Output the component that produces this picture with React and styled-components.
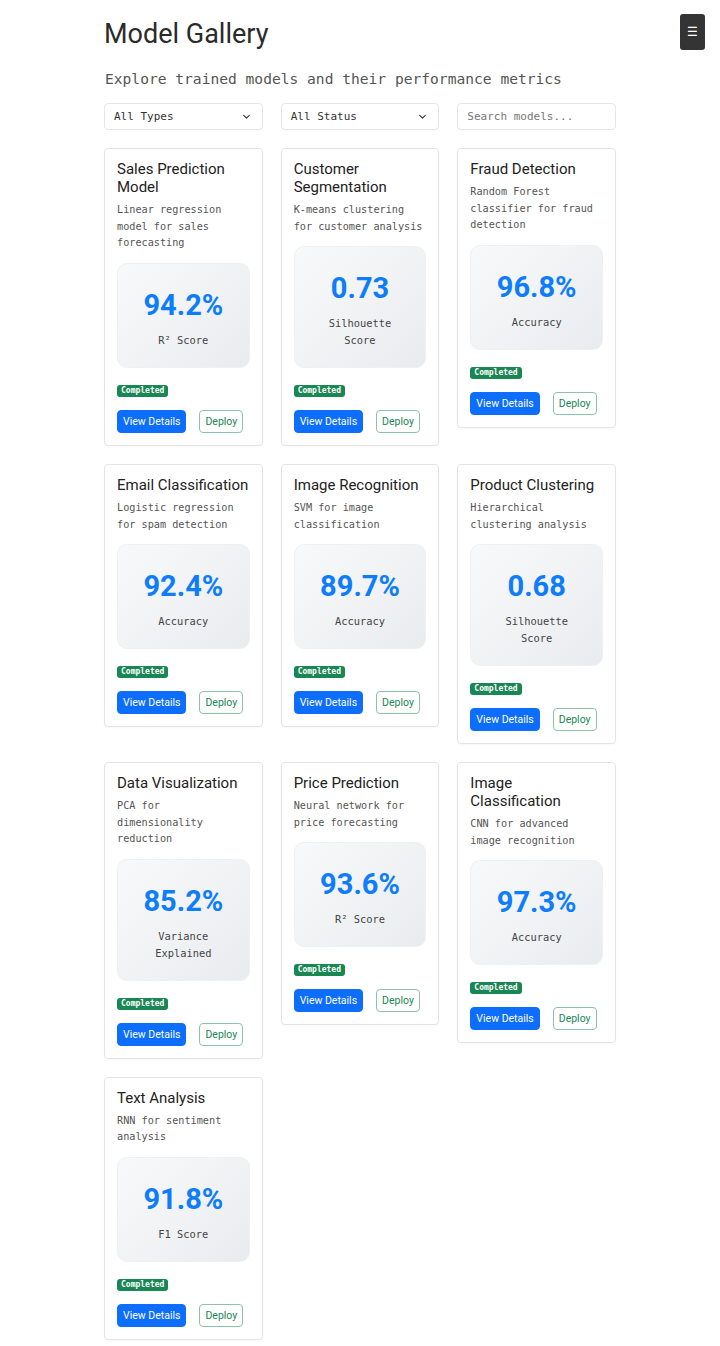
import React from "react";
import styled, { createGlobalStyle } from "styled-components";

const GlobalStyle = createGlobalStyle`
  * { box-sizing: border-box; }
  body {
    margin: 0;
    background: #ffffff;
    font-family: Roboto, "Liberation Sans", sans-serif;
    color: #212529;
  }
`;

const MONO = `"DejaVu Sans Mono", "Liberation Mono", monospace`;

const Page = styled.main`
  width: 512px;
  margin: 0 auto;
  padding: 18px 0 40px;
`;

const Title = styled.h1`
  margin: 0;
  font-family: Roboto, sans-serif;
  font-size: 27px;
  font-weight: 400;
  line-height: 32px;
  color: #2b2b2b;
`;

const Subtitle = styled.p`
  margin: 19px 0 0 1px;
  font-family: ${MONO};
  font-size: 14.6px;
  line-height: 20px;
  color: #555;
`;

const Filters = styled.div`
  display: grid;
  grid-template-columns: repeat(3, minmax(0, 1fr));
  gap: 18px;
  margin-top: 14px;
`;

const FakeSelect = styled.div`
  height: 27px;
  display: flex;
  align-items: center;
  justify-content: space-between;
  padding: 0 11px 0 9px;
  border: 1px solid #e3e6ea;
  border-radius: 4px;
  background: #fff;
  font-family: ${MONO};
  font-size: 11px;
  color: #333;
`;

const SearchInput = styled.input`
  height: 27px;
  width: 100%;
  min-width: 0;
  padding: 0 9px;
  border: 1px solid #e3e6ea;
  border-radius: 4px;
  font-family: ${MONO};
  font-size: 11px;
  color: #333;
  outline: none;
  &::placeholder { color: #777; }
`;

const Grid = styled.section`
  display: grid;
  grid-template-columns: repeat(3, minmax(0, 1fr));
  column-gap: 18px;
  row-gap: 18px;
  align-items: start;
  margin-top: 18px;
`;

const Card = styled.article`
  border: 1px solid #e2e5e8;
  border-radius: 4px;
  padding: 11px 12px 12px;
  background: #fff;
  box-shadow: 0 1px 2px rgba(0, 0, 0, 0.03);
`;

const CardTitle = styled.h2`
  margin: 0;
  font-family: Roboto, sans-serif;
  font-size: 15px;
  font-weight: 400;
  line-height: 18px;
  color: #222;
`;

const Desc = styled.p`
  margin: 6px 0 0;
  font-family: ${MONO};
  font-size: 10.2px;
  line-height: 16.5px;
  color: #555;
`;

const Metric = styled.div`
  margin-top: 11px;
  padding: 24px 20px 18px;
  border-radius: 10px;
  border: 1px solid #eef0f2;
  background: linear-gradient(135deg, #f8f9fa 0%, #e9ecef 100%);
  text-align: center;
`;

const Value = styled.div`
  font-family: Roboto, sans-serif;
  font-size: 29px;
  font-weight: 700;
  line-height: 34px;
  color: #0d7dfd;
`;

const Label = styled.div`
  margin-top: 10px;
  font-family: ${MONO};
  font-size: 10.4px;
  line-height: 17px;
  color: #444;
`;

const Badge = styled.span`
  display: inline-block;
  margin-top: 17px;
  padding: 0 4px;
  height: 12px;
  line-height: 12px;
  border-radius: 3px;
  background: #198754;
  color: #fff;
  font-family: ${MONO};
  font-size: 8px;
  font-weight: 700;
`;

const Actions = styled.div`
  display: flex;
  gap: 13px;
  margin-top: 13px;
`;

const Button = styled.button`
  height: 23px;
  padding: 0 5px;
  white-space: nowrap;
  border-radius: 4px;
  font-family: Roboto, sans-serif;
  font-size: 10.5px;
  font-weight: 400;
  cursor: pointer;
  border: 1px solid ${(p) => (p.$variant === "primary" ? "#0d6efd" : "#8cc2a7")};
  background: ${(p) => (p.$variant === "primary" ? "#0d6efd" : "#fff")};
  color: ${(p) => (p.$variant === "primary" ? "#fff" : "#198754")};
`;

const Menu = styled.button`
  position: fixed;
  top: 14px;
  right: 15px;
  width: 25px;
  height: 36px;
  border: none;
  border-radius: 3px;
  background: #343434;
  color: #fff;
  font-size: 12px;
  padding: 0;
  display: flex;
  align-items: center;
  justify-content: center;
`;

const Chevron = () => (
  <svg width="9" height="9" viewBox="0 0 16 16" fill="none">
    <path d="M3 6l5 5 5-5" stroke="#333" strokeWidth="1.8" strokeLinecap="round" strokeLinejoin="round" />
  </svg>
);

const models = [
  ["Sales Prediction Model", "Linear regression model for sales forecasting", "94.2%", "R² Score"],
  ["Customer Segmentation", "K-means clustering for customer analysis", "0.73", "Silhouette Score"],
  ["Fraud Detection", "Random Forest classifier for fraud detection", "96.8%", "Accuracy"],
  ["Email Classification", "Logistic regression for spam detection", "92.4%", "Accuracy"],
  ["Image Recognition", "SVM for image classification", "89.7%", "Accuracy"],
  ["Product Clustering", "Hierarchical clustering analysis", "0.68", "Silhouette Score"],
  ["Data Visualization", "PCA for dimensionality reduction", "85.2%", "Variance Explained"],
  ["Price Prediction", "Neural network for price forecasting", "93.6%", "R² Score"],
  ["Image Classification", "CNN for advanced image recognition", "97.3%", "Accuracy"],
  ["Text Analysis", "RNN for sentiment analysis", "91.8%", "F1 Score"],
];

export default function App() {
  return (
    <>
      <GlobalStyle />
      <Menu aria-label="Menu">☰</Menu>
      <Page>
        <Title>Model Gallery</Title>
        <Subtitle>Explore trained models and their performance metrics</Subtitle>
        <Filters>
          <FakeSelect role="combobox">All Types<Chevron /></FakeSelect>
          <FakeSelect role="combobox">All Status<Chevron /></FakeSelect>
          <SearchInput placeholder="Search models..." />
        </Filters>
        <Grid>
          {models.map(([name, desc, value, label]) => (
            <Card key={name}>
              <CardTitle>{name}</CardTitle>
              <Desc>{desc}</Desc>
              <Metric>
                <Value>{value}</Value>
                <Label>{label}</Label>
              </Metric>
              <Badge>Completed</Badge>
              <Actions>
                <Button $variant="primary">View Details</Button>
                <Button>Deploy</Button>
              </Actions>
            </Card>
          ))}
        </Grid>
      </Page>
    </>
  );
}
